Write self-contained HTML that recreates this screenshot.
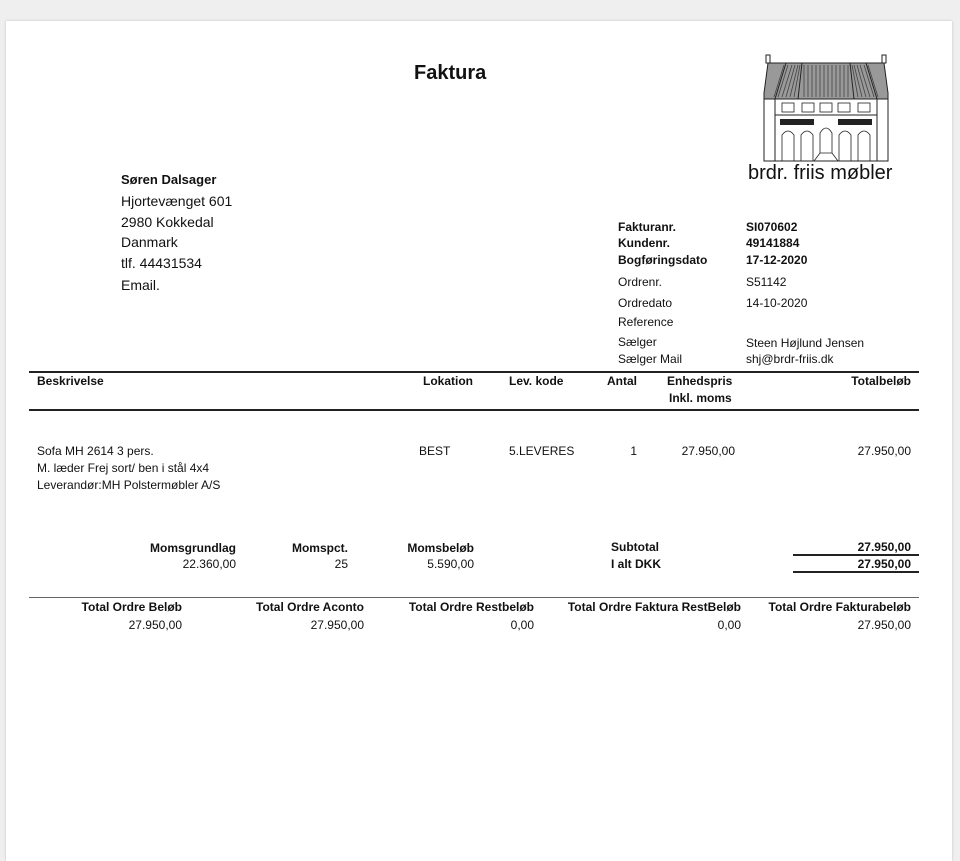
<!DOCTYPE html>
<html><head><meta charset="utf-8"><style>
html,body{margin:0;padding:0;}
body{width:960px;height:846px;background:#efefef;position:relative;overflow:hidden;font-family:"Liberation Sans","DejaVu Sans",sans-serif;color:#111;}
#page{position:absolute;left:6px;top:21px;width:946px;height:840px;background:#fff;box-shadow:0 0 2px #bbb;}
.t{position:absolute;white-space:nowrap;font-size:12px;line-height:14px;}
.b{font-weight:bold;}
.r{text-align:right;}
.a{font-size:14px;line-height:16px;}
.ln{position:absolute;background:#222;}
</style></head><body>
<div id="page"></div>
<div class="t b" style="left:414px;top:61px;font-size:20px;line-height:24px;">Faktura</div>

<svg style="position:absolute;left:760px;top:53px" width="132" height="112" viewBox="0 0 132 112">
<path d="M8 10 H124 L128 40 V46 H4 V40 Z" fill="#999"/>
<g fill="none" stroke="#222" stroke-width="1">
<rect x="6" y="2" width="4" height="8" fill="#fff"/><rect x="122" y="2" width="4" height="8" fill="#fff"/>
<path d="M4 108 V40 L8 10 H124 L128 40 V108 Z"/>
<path d="M15 46 L26 10 M38 46 L42 10 M94 46 L90 10 M117 46 L106 10"/>
<line x1="4" y1="46" x2="128" y2="46"/><line x1="15" y1="46" x2="15" y2="108"/><line x1="117" y1="46" x2="117" y2="108"/>
<line x1="15" y1="62" x2="117" y2="62"/>
</g>
<g stroke="#444" stroke-width="0.8">
<path d="M14 44 L24 12 M18 44 L28 12 M22 44 L32 12 M26 44 L35 12 M30 44 L38 12 M34 44 L40 12"/>
<path d="M44 12 V44 M48 12 V44 M52 12 V44 M56 12 V44 M60 12 V44 M64 12 V44 M68 12 V44 M72 12 V44 M76 12 V44 M80 12 V44 M84 12 V44 M88 12 V44"/>
<path d="M118 44 L108 12 M114 44 L104 12 M110 44 L100 12 M106 44 L97 12 M102 44 L94 12 M98 44 L92 12"/>
</g>
<g fill="none" stroke="#222" stroke-width="0.8">
<rect x="22" y="50" width="12" height="9"/><rect x="42" y="50" width="12" height="9"/><rect x="60" y="50" width="12" height="9"/><rect x="78" y="50" width="12" height="9"/><rect x="98" y="50" width="12" height="9"/>
<path d="M22 108 V82 Q28 74 34 82 V108 M41 108 V82 Q47 74 53 82 V108 M79 108 V82 Q85 74 91 82 V108 M98 108 V82 Q104 74 110 82 V108"/>
<path d="M60 100 V80 Q66 70 72 80 V100 M54 108 L60 100 H72 L78 108"/>
</g>
<rect x="20" y="66" width="34" height="6" fill="#222"/><rect x="78" y="66" width="34" height="6" fill="#222"/>
</svg>
<div class="t" style="left:748px;top:161px;font-size:20px;line-height:24px;">brdr. friis møbler</div>

<div class="t b" style="left:121px;top:172px;font-size:13px;line-height:16px;">Søren Dalsager</div>
<div class="t a" style="left:121px;top:193px;">Hjortevænget 601</div>
<div class="t a" style="left:121px;top:214px;">2980 Kokkedal</div>
<div class="t a" style="left:121px;top:234px;">Danmark</div>
<div class="t a" style="left:121px;top:255px;">tlf. 44431534</div>
<div class="t a" style="left:121px;top:277px;">Email.</div>

<div class="t b" style="left:618px;top:220px;">Fakturanr.</div><div class="t b" style="left:746px;top:220px;">SI070602</div>
<div class="t b" style="left:618px;top:236px;">Kundenr.</div><div class="t b" style="left:746px;top:236px;">49141884</div>
<div class="t b" style="left:618px;top:253px;">Bogføringsdato</div><div class="t b" style="left:746px;top:253px;">17-12-2020</div>
<div class="t" style="left:618px;top:275px;">Ordrenr.</div><div class="t" style="left:746px;top:275px;">S51142</div>
<div class="t" style="left:618px;top:296px;">Ordredato</div><div class="t" style="left:746px;top:296px;">14-10-2020</div>
<div class="t" style="left:618px;top:315px;">Reference</div>
<div class="t" style="left:618px;top:335px;">Sælger</div><div class="t" style="left:746px;top:336px;">Steen Højlund Jensen</div>
<div class="t" style="left:618px;top:352px;">Sælger Mail</div><div class="t" style="left:746px;top:352px;">shj@brdr-friis.dk</div>

<div class="ln" style="left:29px;top:371px;width:890px;height:2px;"></div>
<div class="ln" style="left:29px;top:409px;width:890px;height:2px;"></div>
<div class="t b" style="left:37px;top:374px;">Beskrivelse</div>
<div class="t b r" style="left:373px;width:100px;top:374px;">Lokation</div>
<div class="t b" style="left:509px;top:374px;">Lev. kode</div>
<div class="t b r" style="left:577px;width:60px;top:374px;">Antal</div>
<div class="t b" style="left:667px;top:374px;">Enhedspris</div>
<div class="t b" style="left:669px;top:391px;">Inkl. moms</div>
<div class="t b r" style="left:791px;width:120px;top:374px;">Totalbeløb</div>

<div class="t" style="left:37px;top:444px;">Sofa MH 2614 3 pers.</div>
<div class="t" style="left:37px;top:461px;">M. læder Frej sort/ ben i stål 4x4</div>
<div class="t" style="left:37px;top:478px;">Leverandør:MH Polstermøbler A/S</div>
<div class="t" style="left:419px;top:444px;">BEST</div>
<div class="t" style="left:509px;top:444px;">5.LEVERES</div>
<div class="t r" style="left:597px;width:40px;top:444px;">1</div>
<div class="t r" style="left:635px;width:100px;top:444px;">27.950,00</div>
<div class="t r" style="left:791px;width:120px;top:444px;">27.950,00</div>

<div class="t b r" style="left:100px;width:136px;top:541px;">Momsgrundlag</div>
<div class="t r" style="left:100px;width:136px;top:557px;">22.360,00</div>
<div class="t b r" style="left:248px;width:100px;top:541px;">Momspct.</div>
<div class="t r" style="left:248px;width:100px;top:557px;">25</div>
<div class="t b r" style="left:374px;width:100px;top:541px;">Momsbeløb</div>
<div class="t r" style="left:374px;width:100px;top:557px;">5.590,00</div>
<div class="t b" style="left:611px;top:540px;">Subtotal</div>
<div class="t b" style="left:611px;top:557px;">I alt DKK</div>
<div class="t b r" style="left:791px;width:120px;top:540px;">27.950,00</div>
<div class="t b r" style="left:791px;width:120px;top:557px;">27.950,00</div>
<div class="ln" style="left:793px;top:554px;width:126px;height:2px;"></div>
<div class="ln" style="left:793px;top:571px;width:126px;height:2px;"></div>

<div class="ln" style="left:29px;top:597px;width:890px;height:1px;background:#666;"></div>
<div class="t b r" style="left:40px;width:142px;top:600px;">Total Ordre Beløb</div>
<div class="t r" style="left:40px;width:142px;top:618px;">27.950,00</div>
<div class="t b r" style="left:200px;width:164px;top:600px;">Total Ordre Aconto</div>
<div class="t r" style="left:200px;width:164px;top:618px;">27.950,00</div>
<div class="t b r" style="left:374px;width:160px;top:600px;">Total Ordre Restbeløb</div>
<div class="t r" style="left:374px;width:160px;top:618px;">0,00</div>
<div class="t b r" style="left:541px;width:200px;top:600px;">Total Ordre Faktura RestBeløb</div>
<div class="t r" style="left:541px;width:200px;top:618px;">0,00</div>
<div class="t b r" style="left:741px;width:170px;top:600px;">Total Ordre Fakturabeløb</div>
<div class="t r" style="left:741px;width:170px;top:618px;">27.950,00</div>
</body></html>
